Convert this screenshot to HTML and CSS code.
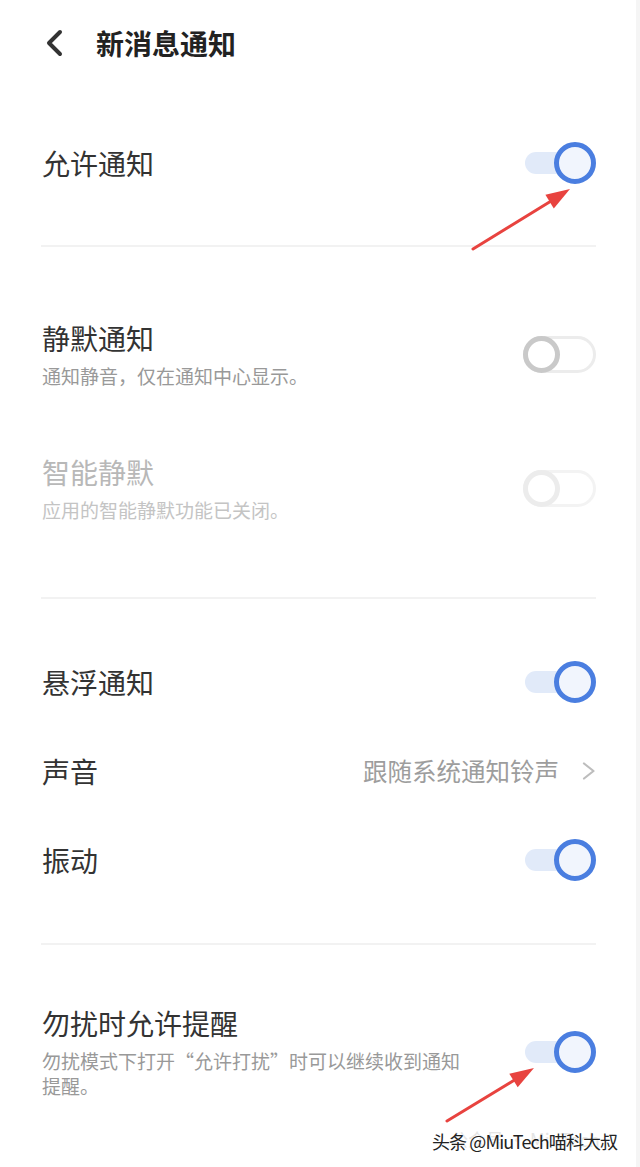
FILE: index.html
```html
<!DOCTYPE html>
<html lang="zh-CN">
<head>
    <meta charset="UTF-8">
    <meta name="viewport" content="width=device-width, initial-scale=1.0">
    <title>新消息通知</title>
    <link rel="stylesheet" href="styles.css">
</head>
<body>
    <div class="page">

        <!-- Header -->
        <div class="header">
            <svg class="back" width="18" height="28" viewBox="0 0 18 28">
                <path d="M15 3 L4 14 L15 25" fill="none" stroke="#333" stroke-width="4" stroke-linecap="round" stroke-linejoin="round"/>
            </svg>
            <div class="page-title">新消息通知</div>
        </div>

        <div class="section first">
            <div class="row">
                <div class="row-title">允许通知</div>
                <div class="switch on"><span class="track"></span><span class="knob"></span></div>
            </div>
        </div>

        <div class="divider"></div>

        <div class="section second">
            <div class="row tall">
                <div class="texts">
                    <div class="row-title">静默通知</div>
                    <div class="row-sub">通知静音，仅在通知中心显示。</div>
                </div>
                <div class="switch off"><span class="track"></span><span class="knob"></span></div>
            </div>
            <div class="row tall disabled">
                <div class="texts">
                    <div class="row-title">智能静默</div>
                    <div class="row-sub">应用的智能静默功能已关闭。</div>
                </div>
                <div class="switch off"><span class="track"></span><span class="knob"></span></div>
            </div>
        </div>

        <div class="divider"></div>

        <div class="section third">
            <div class="row">
                <div class="row-title">悬浮通知</div>
                <div class="switch on"><span class="track"></span><span class="knob"></span></div>
            </div>
            <div class="row">
                <div class="row-title">声音</div>
                <div class="row-value">
                    跟随系统通知铃声
                    <svg width="14" height="18" viewBox="0 0 14 18">
                        <path d="M2 1.5 L11.5 9 L2 16.5" fill="none" stroke="#bdbdbd" stroke-width="2.2" stroke-linecap="round" stroke-linejoin="round"/>
                    </svg>
                </div>
            </div>
            <div class="row">
                <div class="row-title">振动</div>
                <div class="switch on"><span class="track"></span><span class="knob"></span></div>
            </div>
        </div>

        <div class="divider"></div>

        <div class="section fourth">
            <div class="row tall">
                <div class="texts wrap">
                    <div class="row-title">勿扰时允许提醒</div>
                    <div class="row-sub">勿扰模式下打开“允许打扰”时可以继续收到通知提醒。</div>
                </div>
                <div class="switch on"><span class="track"></span><span class="knob"></span></div>
            </div>
        </div>

        <!-- red arrows drawn over the screenshot -->
        <svg class="arrows" width="640" height="1167" viewBox="0 0 640 1167">
            <line x1="473" y1="249" x2="556" y2="198" stroke="#e8433f" stroke-width="3" stroke-linecap="round"/>
            <polygon points="570,189 553.8,208.4 545.4,194.8" fill="#e8433f"/>
            <line x1="447" y1="1121" x2="521" y2="1076" stroke="#e8433f" stroke-width="3" stroke-linecap="round"/>
            <polygon points="534,1068 517.7,1087.3 509.3,1073.7" fill="#e8433f"/>
        </svg>

        <div class="watermark">
            <span class="ghost">公众号 · MiuTech</span>
            <span class="mark">头条 @MiuTech喵科大叔</span>
        </div>
    </div>
</body>
</html>
```

FILE: styles.css
```css
body {
    margin: 0;
    padding: 0;
    background: #ffffff;
    font-family: "Noto Sans CJK SC", "Noto Sans", sans-serif;
    color: #333;
}

.page {
    position: relative;
    width: 640px;
    height: 1167px;
    overflow: hidden;
    box-shadow: inset -4px 0 0 #f5f5f5;
}

/* Header */
.header {
    height: 86px;
    display: flex;
    align-items: center;
    padding-left: 45px;
}

.back {
    display: block;
    margin-right: 33px;
}

.page-title {
    font-size: 28px;
    font-weight: bold;
    color: #222;
    line-height: 36px;
}

/* Sections */
.section {
    padding: 0 44px 0 42px;
}

.section.first {
    padding-top: 32px;
    padding-bottom: 38px;
}

.section.second {
    padding-top: 40px;
    padding-bottom: 42px;
}

.section.third {
    padding-top: 38px;
    padding-bottom: 39px;
}

.section.fourth {
    padding-top: 60px;
}

.divider {
    height: 2px;
    margin: 0 44px 0 41px;
    background: #f2f2f2;
}

.row {
    height: 89px;
    display: flex;
    align-items: center;
    justify-content: space-between;
}

.row.tall {
    height: auto;
    padding: 33px 0;
}

.section.fourth .row.tall {
    padding-top: 0;
}

.row-title {
    font-size: 28px;
    line-height: 36px;
    color: #333;
}

.row-sub {
    margin-top: 7px;
    font-size: 19px;
    line-height: 25px;
    color: #999;
}

.texts.wrap {
    max-width: 430px;
}

.disabled .row-title {
    color: #b8b8b8;
}

.disabled .row-sub {
    color: #c4c4c4;
}

.row-value {
    display: flex;
    align-items: center;
    font-size: 24.5px;
    color: #9d9d9d;
}

.row-value svg {
    display: block;
    margin-left: 23px;
}

/* Switches */
.switch {
    position: relative;
    flex-shrink: 0;
    width: 73px;
}

.switch.on {
    height: 42px;
}

.switch.on .track {
    position: absolute;
    left: 2px;
    top: 10px;
    width: 44px;
    height: 22px;
    border-radius: 11px;
    background: #e1eaf9;
}

.switch.on .knob {
    position: absolute;
    right: 0;
    top: 0;
    width: 32px;
    height: 32px;
    border: 5px solid #4a7ee0;
    border-radius: 50%;
    background: #f1f5fd;
}

.switch.off {
    height: 37px;
}

.switch.off .track {
    position: absolute;
    left: 0;
    top: 0;
    width: 67px;
    height: 31px;
    border: 3px solid #ececec;
    border-radius: 19px;
    background: #fff;
}

.switch.off .knob {
    position: absolute;
    left: 0;
    top: 0;
    width: 27px;
    height: 27px;
    border: 5px solid #c9c9c9;
    border-radius: 50%;
    background: #fff;
}

.disabled .switch.off .track {
    border-color: #f3f3f3;
}

.disabled .switch.off .knob {
    border-color: #ececec;
}

/* Overlays */
.arrows {
    position: absolute;
    left: 0;
    top: 0;
    pointer-events: none;
}

.watermark {
    position: absolute;
    left: 432px;
    top: 1128px;
    width: 190px;
    height: 28px;
}

.watermark .ghost {
    position: absolute;
    left: 18px;
    top: -2px;
    font-size: 18px;
    color: #e4e4e4;
    white-space: nowrap;
}

.watermark .mark {
    position: absolute;
    left: 0;
    top: 0;
    font-size: 18px;
    letter-spacing: -0.9px;
    color: #222;
    white-space: nowrap;
    text-shadow: 0 0 2px #fff, 0 0 2px #fff;
}
```
